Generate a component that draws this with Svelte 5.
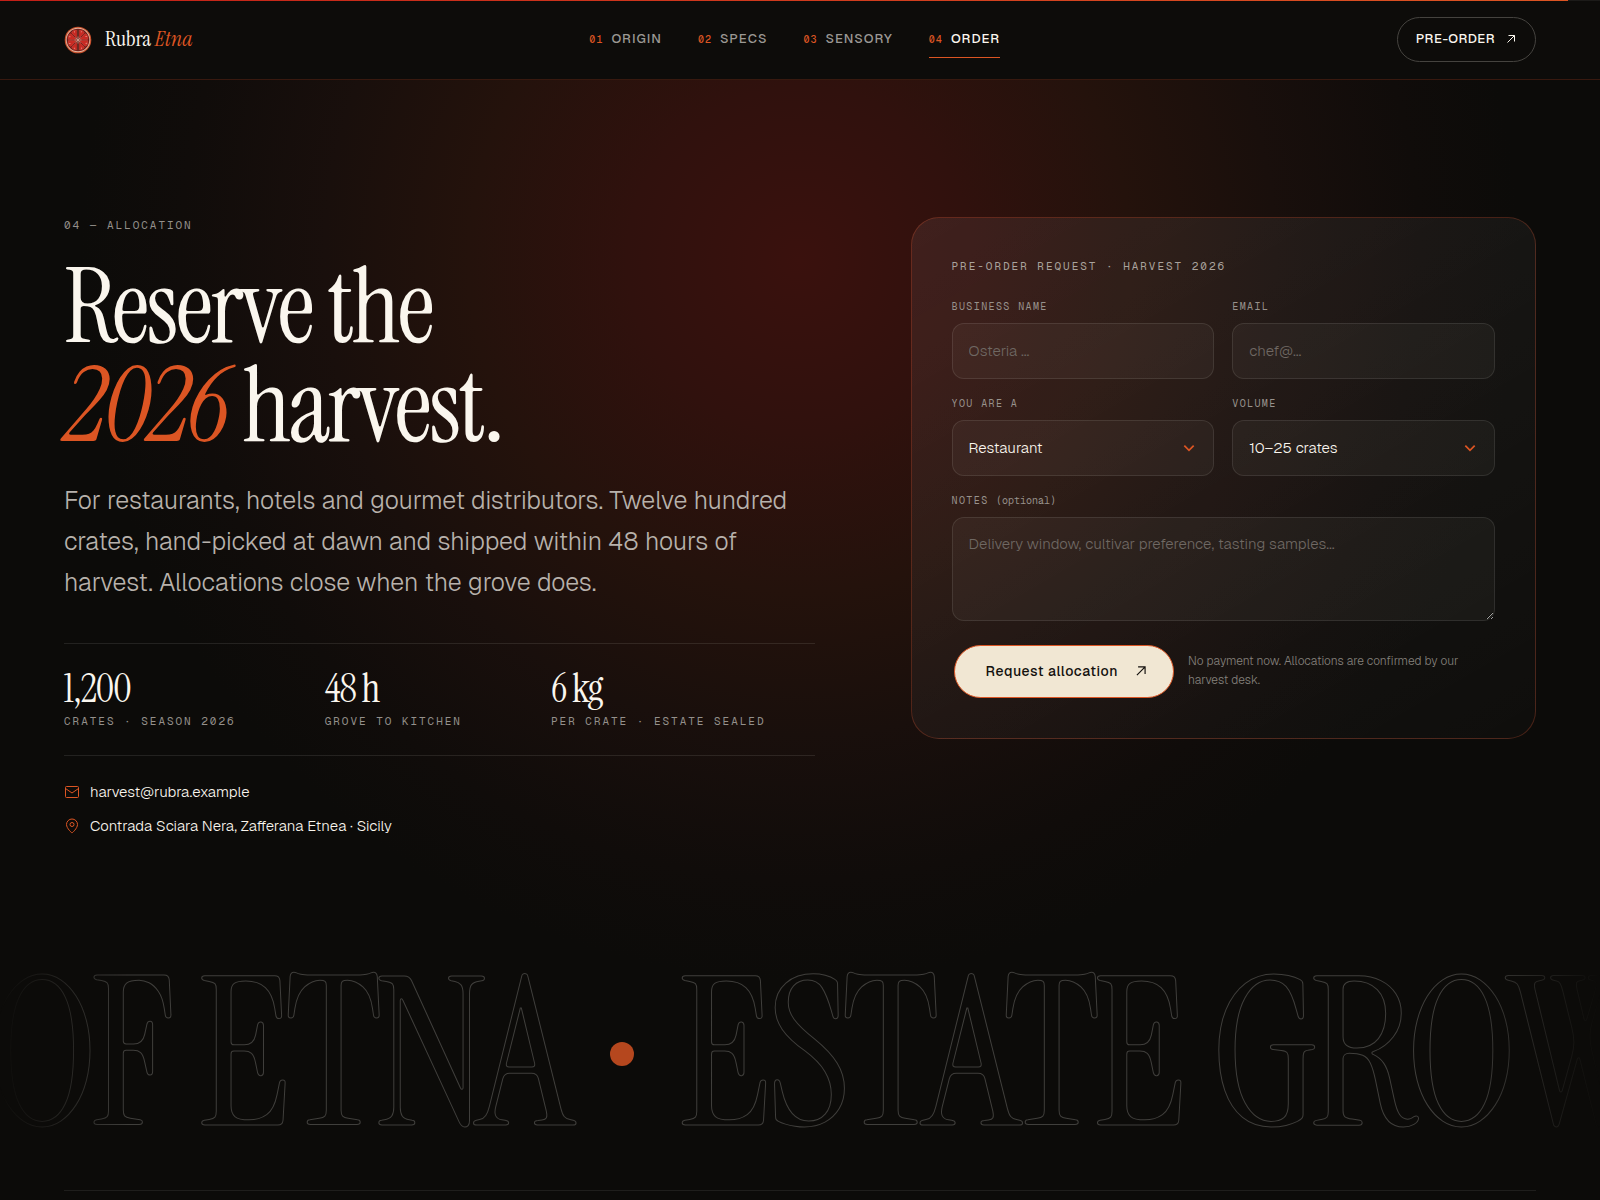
<script lang="ts">
  type NavLink = { index: string; label: string; href: string };

  const links: NavLink[] = [
    { index: "01", label: "Origin", href: "#origin" },
    { index: "02", label: "Specs", href: "#specs" },
    { index: "03", label: "Sensory", href: "#sensory" },
    { index: "04", label: "Order", href: "#order" },
  ];

  const stats = [
    { value: "1,200", label: "Crates · Season 2026" },
    { value: "48 h", label: "Grove to kitchen" },
    { value: "6 kg", label: "Per crate · Estate sealed" },
  ];

  const segments = [0, 45, 90, 135, 180, 225, 270, 315];

  let active = $state("04");
  let business = $state("");
  let email = $state("");
  let kind = $state("Restaurant");
  let volume = $state("10–25 crates");
  let notes = $state("");

  function submit(e: SubmitEvent) {
    e.preventDefault();
  }
</script>

{#snippet arrow()}
  <svg class="arrow" viewBox="0 0 12 12" aria-hidden="true">
    <path d="M2.500 9.500 9.500 2.500M3.500 2.500h6v6" />
  </svg>
{/snippet}

<div class="page">
  <header class="header">
    <div class="progress"><span></span></div>
    <a class="brand" href="#top">
      <svg class="mark" viewBox="0 0 28 28" aria-hidden="true">
        <circle cx="14" cy="14" r="13.300" fill="#c8502c" />
        <circle cx="14" cy="14" r="12.200" fill="#e2b59c" />
        <circle cx="14" cy="14" r="11.300" fill="#6e1715" />
        {#each segments as angle}
          <path
            d="M14 12.200 10.800 5Q14 2.200 17.200 5Z"
            fill="#c92a23"
            stroke="#e0574a"
            stroke-width=".4"
            transform="rotate({angle + 22} 14 14)"
          />
          <circle
            cx="14"
            cy="5.200"
            r=".5"
            fill="#f4c9b8"
            transform="rotate({angle + 22} 14 14)"
          />
        {/each}
        <path d="M14 3.500v21" stroke="#6b2a22" stroke-width="2.400" />
        <path d="M14 10.500v7M10.500 14h7M11.500 11.500l5 5M16.500 11.500l-5 5" stroke="#d9a595" stroke-width=".7" />
      </svg>
      <span>Rubra <em>Etna</em></span>
    </a>
    <nav class="nav" aria-label="Main">
      {#each links as link (link.index)}
        <a
          href={link.href}
          class:active={active === link.index}
          onclick={() => (active = link.index)}
        >
          <span class="num">{link.index}</span>{link.label}
        </a>
      {/each}
    </nav>
    <a class="preorder" href="#order">Pre-order {@render arrow()}</a>
  </header>

  <main class="order" id="order">
    <section class="intro">
      <p class="eyebrow">04 — Allocation</p>
      <h1>Reserve the<br /><em>2026</em> harvest.</h1>
      <p class="lead">
        For restaurants, hotels and gourmet distributors. Twelve hundred crates,
        hand-picked at dawn and shipped within 48 hours of harvest. Allocations
        close when the grove does.
      </p>
      <dl class="stats">
        {#each stats as stat}
          <div class="stat">
            <dd>{stat.value}</dd>
            <dt class="eyebrow">{stat.label}</dt>
          </div>
        {/each}
      </dl>
      <address class="contact">
        <a href="mailto:harvest@rubra.example">
          <svg viewBox="0 0 16 16" aria-hidden="true">
            <rect x="1.500" y="2.500" width="13" height="11" rx="1" />
            <path d="m1.500 4.500 6.500 4.500 6.500-4.500" />
          </svg>
          harvest@rubra.example
        </a>
        <span>
          <svg viewBox="0 0 16 16" aria-hidden="true">
            <path d="M8 15S2.500 10.500 2.500 6.500a5.500 5.500 0 0 1 11 0C13.500 10.500 8 15 8 15Z" />
            <circle cx="8" cy="6.500" r="2" />
          </svg>
          Contrada Sciara Nera, Zafferana Etnea · Sicily
        </span>
      </address>
    </section>

    <form class="card" onsubmit={submit}>
      <h2 class="eyebrow">Pre-order request · Harvest 2026</h2>
      <div class="fields">
        <div class="field">
          <label for="business">Business name</label>
          <input id="business" type="text" placeholder="Osteria …" bind:value={business} />
        </div>
        <div class="field">
          <label for="email">Email</label>
          <input id="email" type="email" placeholder="chef@…" bind:value={email} />
        </div>
        <div class="field">
          <label for="kind">You are a</label>
          <div class="select">
            <select id="kind" bind:value={kind}>
              <option>Restaurant</option>
            </select>
            <svg viewBox="0 0 12 12" aria-hidden="true"><path d="m2 4 4 4 4-4" /></svg>
          </div>
        </div>
        <div class="field">
          <label for="volume">Volume</label>
          <div class="select">
            <select id="volume" bind:value={volume}>
              <option>10–25 crates</option>
            </select>
            <svg viewBox="0 0 12 12" aria-hidden="true"><path d="m2 4 4 4 4-4" /></svg>
          </div>
        </div>
        <div class="field wide">
          <label for="notes">Notes <span>(optional)</span></label>
          <textarea
            id="notes"
            placeholder="Delivery window, cultivar preference, tasting samples…"
            bind:value={notes}
          ></textarea>
        </div>
      </div>
      <div class="submit">
        <button type="submit">Request allocation {@render arrow()}</button>
        <p>No payment now. Allocations are confirmed by our harvest desk.</p>
      </div>
    </form>
  </main>

  <div class="marquee">
    <div class="track">
      <span>OF ETNA</span>
      <i class="dot"></i>
      <span>ESTATE GROWN</span>
    </div>
  </div>

  <footer class="footer"></footer>
</div>

<style>
  :global(body) {
    margin: 0;
    background: #0c0b09;
  }
  .page {
    --ink: #faf6ee;
    --accent: #dc5523;
    --serif: "Instrument Serif", "Liberation Serif", serif;
    --sans: Geist, Inter, sans-serif;
    --mono: "Geist Mono", "Liberation Mono", monospace;
    min-height: 100vh;
    overflow: hidden;
    color: var(--ink);
    font-family: var(--sans);
    background: radial-gradient(
      circle 720px at 50% 260px,
      #3a110d 0%,
      #30110d 24%,
      #24120c 46%,
      #190f0c 66%,
      #100c0a 86%,
      #0c0b09 100%
    );
  }
  .page *,
  .page *::before {
    box-sizing: border-box;
  }
  em {
    color: var(--accent);
    font-style: italic;
  }
  a {
    color: inherit;
    text-decoration: none;
  }

  .header {
    position: relative;
    display: flex;
    align-items: center;
    justify-content: space-between;
    height: 80px;
    padding: 0 64px;
    background: #0d0c0a;
    border-bottom: 1px solid #38190f;
  }
  .progress {
    position: absolute;
    inset: 0 0 auto;
    height: 1px;
    background: #1c1b19;
  }
  .progress span {
    display: block;
    width: 98%;
    height: 1px;
    background: linear-gradient(90deg, #c21f17, #dc5523);
  }
  .brand {
    display: flex;
    align-items: center;
    gap: 13px;
    font-family: var(--serif);
    font-size: 22px;
    line-height: 28px;
  }
  .brand span {
    padding-bottom: 2px;
  }
  .mark {
    width: 28px;
    height: 28px;
  }
  .nav {
    display: flex;
    gap: 36px;
  }
  .nav a {
    display: flex;
    align-items: baseline;
    gap: 8px;
    padding: 9px 0;
    border-bottom: 1px solid transparent;
    font-size: 13px;
    font-weight: 500;
    line-height: 16px;
    letter-spacing: 0.08em;
    text-transform: uppercase;
    color: #9b9894;
  }
  .nav a.active {
    color: var(--ink);
    border-color: var(--accent);
  }
  .num {
    font-family: var(--mono);
    font-size: 10px;
    color: var(--accent);
  }
  .arrow {
    width: 12px;
    height: 12px;
    fill: none;
    stroke: currentColor;
  }
  .preorder {
    display: flex;
    align-items: center;
    gap: 10px;
    height: 45px;
    padding: 0 18px 2px;
    border: 1px solid #45433f;
    border-radius: 24px;
    font-size: 13px;
    font-weight: 500;
    letter-spacing: 0.04em;
    text-transform: uppercase;
  }

  .order {
    display: grid;
    grid-template-columns: 6fr 5fr;
    gap: 96px;
    align-items: start;
    padding: 137px 64px 0;
  }
  .eyebrow {
    margin: 0;
    font-family: var(--mono);
    font-size: 11px;
    font-weight: 400;
    line-height: 16px;
    letter-spacing: 0.18em;
    text-transform: uppercase;
    color: #94908b;
  }
  h1 {
    margin: 24px 0 25px;
    font-family: var(--serif);
    font-size: 104px;
    font-weight: 400;
    line-height: 99px;
    letter-spacing: -0.025em;
  }
  .lead {
    margin: 0;
    font-size: 25px;
    font-weight: 300;
    line-height: 41px;
    color: #b8b2ac;
  }
  .stats {
    display: grid;
    grid-template-columns: repeat(3, auto);
    gap: 40px;
    margin: 40px 0 25px;
    padding: 24px 0 26px;
    border: solid rgba(250, 246, 238, 0.1);
    border-width: 1px 0;
  }
  .stat {
    display: flex;
    flex-direction: column;
    gap: 4px;
  }
  .stat dd {
    margin: 0;
    font-family: var(--serif);
    font-size: 40px;
    line-height: 41px;
    letter-spacing: -0.025em;
  }
  .contact {
    display: flex;
    flex-direction: column;
    align-items: flex-start;
    gap: 12px;
    font-size: 15px;
    font-style: normal;
    font-weight: 300;
    line-height: 22px;
    color: var(--ink);
  }
  .contact > * {
    display: flex;
    align-items: center;
    gap: 10px;
  }
  .contact svg {
    width: 16px;
    height: 16px;
    fill: none;
    stroke: var(--accent);
  }

  .card {
    padding: 40px;
    border: 1px solid rgba(220, 85, 50, 0.28);
    border-radius: 28px;
    background: linear-gradient(150deg, rgba(255, 255, 255, 0.065), rgba(255, 255, 255, 0.015));
  }
  .card h2 {
    margin-bottom: 24px;
    color: #aaa39d;
  }
  .fields {
    display: grid;
    grid-template-columns: 1fr 1fr;
    gap: 16px 18px;
  }
  .field {
    display: flex;
    flex-direction: column;
    gap: 8px;
    min-width: 0;
  }
  .wide {
    grid-column: 1 / -1;
  }
  label {
    font-family: var(--mono);
    font-size: 10px;
    line-height: 17px;
    letter-spacing: 0.14em;
    text-transform: uppercase;
    color: #98928c;
  }
  label span {
    letter-spacing: 0;
    text-transform: none;
  }
  input,
  select,
  textarea {
    display: block;
    width: 100%;
    height: 56px;
    margin: 0;
    padding: 0 16px 2px;
    border: 1px solid rgba(250, 246, 238, 0.1);
    border-radius: 12px;
    background: rgba(250, 246, 238, 0.04);
    color: var(--ink);
    font-family: var(--sans);
    font-size: 15px;
    font-weight: 300;
    appearance: none;
  }
  textarea {
    height: 104px;
    padding: 16px;
    line-height: 20px;
    resize: vertical;
  }
  option {
    background: #161412;
  }
  ::placeholder {
    color: #6f6863;
    opacity: 1;
  }
  .select {
    display: grid;
    align-items: center;
  }
  .select > * {
    grid-area: 1 / 1;
  }
  .select svg {
    justify-self: end;
    width: 14px;
    height: 14px;
    margin-right: 18px;
    fill: none;
    stroke: var(--accent);
    stroke-width: 1.500;
    pointer-events: none;
  }
  .submit {
    display: flex;
    align-items: center;
    gap: 14px;
    margin-top: 24px;
    padding-left: 2px;
  }
  button {
    display: flex;
    flex: none;
    align-items: center;
    gap: 16px;
    height: 53px;
    padding: 0 25px 2px 31px;
    border: 1px solid var(--accent);
    border-radius: 27px;
    background: #f1e7d3;
    color: #14110e;
    font-family: var(--sans);
    font-size: 14px;
    font-weight: 500;
    letter-spacing: 0.04em;
    cursor: pointer;
  }
  button .arrow {
    width: 14px;
    height: 14px;
  }
  .submit p {
    margin: 0;
    padding-bottom: 2px;
    font-size: 12px;
    font-weight: 300;
    line-height: 19px;
    color: #85817c;
  }

  .marquee {
    margin-top: 117px;
    overflow: hidden;
    mask-image: linear-gradient(90deg, transparent, #000 8%, #000 92%, transparent);
  }
  .track {
    display: flex;
    align-items: center;
    gap: 44px;
    width: max-content;
    margin-left: -14px;
    font-family: var(--serif);
    font-size: 208px;
    line-height: 200px;
    letter-spacing: -0.03em;
    white-space: nowrap;
  }
  .track span {
    color: transparent;
    -webkit-text-stroke: 1px #403f3c;
  }
  .dot {
    width: 24px;
    height: 24px;
    border-radius: 50%;
    background: #b5471e;
  }
  .footer {
    height: 9px;
    margin: 36px 64px 0;
    border-top: 1px solid #1f1e1c;
  }
</style>
